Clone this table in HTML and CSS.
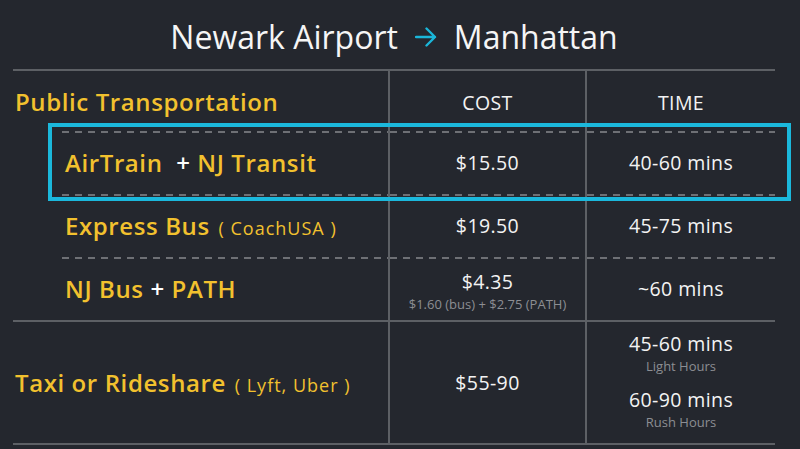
FILE: index.html
```
<!DOCTYPE html>
<html>
<head>
<meta charset="utf-8">
<link rel="stylesheet" href="styles.css">
</head>
<body>
<div class="page">
  <header class="title">
    <span>Newark Airport</span>
    <svg class="arrow" width="22" height="20" viewBox="0 0 22 20"><path d="M1 10 H20 M11.5 1.5 L20 10 L11.5 18.5" fill="none" stroke="#1ab6d9" stroke-width="2.4" stroke-linecap="round" stroke-linejoin="round"/></svg>
    <span>Manhattan</span>
  </header>
  <div class="table">
    <div class="row head">
      <div class="cell label"><span>Public Transportation</span></div>
      <div class="cell num hd">COST</div>
      <div class="cell num hd">TIME</div>
    </div>
    <div class="row dashed">
      <div class="cell label"><span>AirTrain&nbsp; <span class="plus">+</span> NJ Transit</span></div>
      <div class="cell num">$15.50</div>
      <div class="cell num">40-60 mins</div>
    </div>
    <div class="row dashed">
      <div class="cell label"><span>Express Bus <span class="note">( CoachUSA )</span></span></div>
      <div class="cell num">$19.50</div>
      <div class="cell num">45-75 mins</div>
    </div>
    <div class="row dashed">
      <div class="cell label"><span>NJ Bus <span class="plus">+</span> PATH</span></div>
      <div class="cell num stack stack-cost">
        <div class="big">$4.35</div>
        <div class="small">$1.60 (bus) + $2.75 (PATH)</div>
      </div>
      <div class="cell num">~60 mins</div>
    </div>
    <div class="row solid taxi">
      <div class="cell label"><span>Taxi or Rideshare <span class="note">( Lyft, Uber )</span></span></div>
      <div class="cell num">$55-90</div>
      <div class="cell num stack stack-time">
        <div class="big">45-60 mins</div>
        <div class="small">Light Hours</div>
        <div class="big second">60-90 mins</div>
        <div class="small">Rush Hours</div>
      </div>
    </div>
    <div class="highlight"></div>
  </div>
</div>
</body>
</html>
```
FILE: styles.css
```
* { box-sizing: border-box; }
html, body {
  margin: 0;
  padding: 0;
  background: #24272e;
  width: 800px;
  height: 449px;
  overflow: hidden;
}
body {
  font-family: "Open Sans", "Noto Sans", sans-serif;
  color: #f3f3f3;
}
.page {
  padding-left: 13px;
  width: 775px;
}
.title {
  height: 69px;
  display: flex;
  align-items: center;
  justify-content: center;
  gap: 17px;
  font-size: 32px;
  font-weight: 400;
  color: #f5f5f5;
  padding-top: 4px;
}
.arrow { display: block; }
.table {
  position: relative;
  border-top: 2px solid #5d6065;
  border-bottom: 2px solid #5d6065;
}
.row {
  display: grid;
  grid-template-columns: 375px 197px 190px;
}
.cell {
  display: flex;
  align-items: center;
}
.cell.num {
  justify-content: center;
  border-left: 2px solid #5d6065;
  font-size: 19.5px;
  letter-spacing: 0.4px;
}
.head { height: 60px; }
.head .label {
  padding-left: 2px;
}
.hd { font-size: 17px; letter-spacing: 1px; padding-top: 2px; }
.row.dashed { height: 63px; }
.row.dashed .cell {
  background-image: repeating-linear-gradient(to right, #6e7075 0 7px, transparent 7px 13px);
  background-size: 100% 2px;
  background-repeat: no-repeat;
  background-position: top left;
}
.row.dashed .label {
  margin-left: 49px;
  padding-left: 3px;
}
.row.dashed .num:last-child { background-size: calc(100% + 2px) 2px; }
.label {
  font-size: 24px;
  font-weight: 600;
  letter-spacing: 0.6px;
  color: #f2c12e;
  white-space: nowrap;
}
.plus { color: #ffffff; }
.note {
  font-size: 18px;
  font-weight: 400;
  letter-spacing: 1px;
  margin-left: 2px;
}
.row.solid { border-top: 2px solid #5d6065; }
.taxi { height: 123px; }
.taxi .label { padding-left: 2px; }
.stack {
  flex-direction: column;
  justify-content: center;
}
.stack-cost { padding-top: 3px; }
.stack-time { padding-bottom: 5px; }
.big { line-height: normal; }
.small { font-size: 13px; line-height: normal; color: #8c8e93; letter-spacing: 0; }
.second { margin-top: 11px; }
.highlight {
  position: absolute;
  left: 35px;
  top: 52px;
  width: 743px;
  height: 78px;
  border: 4px solid #1bb8dc;
  pointer-events: none;
}
```
